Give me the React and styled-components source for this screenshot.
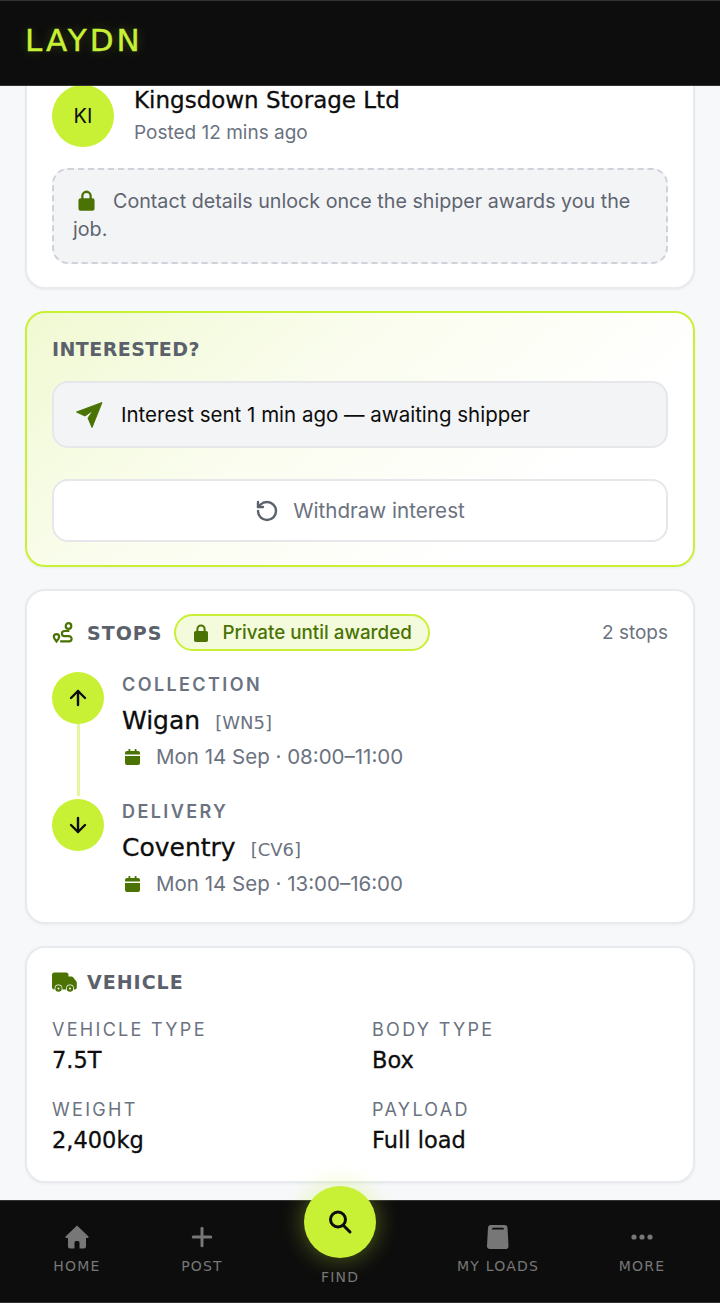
import styled, { createGlobalStyle } from "styled-components";
import { ArrowUp, ArrowDown, RotateCcw, Plus } from "lucide-react";

const GlobalStyle = createGlobalStyle`
  html, body {
    margin: 0;
    padding: 0;
    background: #f6f8fa;
  }
  * {
    box-sizing: border-box;
  }
`;

const heading = `"DejaVu Sans", "Noto Sans", sans-serif`;
const body = `Inter, "Noto Sans", sans-serif`;

const LockIcon = ({ size = 23 }) => (
  <svg width={size} height={size} viewBox="0 0 20 20" fill="#4a7304">
    <path d="M5.400 8V6a4.600 4.600 0 0 1 9.200 0v2h.6A1.800 1.800 0 0 1 17 9.800v7.400a1.800 1.800 0 0 1-1.800 1.800H4.800A1.800 1.800 0 0 1 3 17.200V9.800A1.800 1.800 0 0 1 4.800 8zm2 0h5.200V6a2.600 2.600 0 0 0-5.200 0z" />
  </svg>
);

const PlaneIcon = () => (
  <svg width="30" height="28" viewBox="0 0 30 28" fill="#4a7304" stroke="#4a7304" strokeWidth="1" strokeLinejoin="round">
    <path d="M27 1.500 L1.500 11 L10 15 L18.500 9 L13 17 L17 26.500 Z" />
  </svg>
);

const RouteIcon = () => (
  <svg width="23" height="22" viewBox="0 0 23 22" fill="none" stroke="#4a7304" strokeWidth="2.200" strokeLinecap="round">
    <circle cx="16.500" cy="4" r="2.800" />
    <path d="M16.500 9H12.500a2.600 2.600 0 0 0 0 5.200H17a2.600 2.600 0 0 1 0 5.200H9" />
    <path d="M4.500 19.500C3 17.800 1.800 16.500 1.800 14.800a2.700 2.700 0 0 1 5.400 0c0 1.700-1.200 3-2.700 4.700z" />
  </svg>
);

const CalendarIcon = () => (
  <svg width="15" height="16" viewBox="0 0 15 16" fill="#4a7304">
    <path d="M3.500 0h1.800v2h4.400V0h1.800v2H13a2 2 0 0 1 2 2v1.500H0V4a2 2 0 0 1 2-2h1.500z" />
    <path d="M0 7h15v7a2 2 0 0 1-2 2H2a2 2 0 0 1-2-2z" />
  </svg>
);

const TruckIcon = () => (
  <svg width="25" height="20" viewBox="0 0 25 20" fill="#4a7304">
    <path d="M2.500 0.500H14a2.500 2.500 0 0 1 2.500 2.500V4.500h3a2 2 0 0 1 1.600.8l3.300 4.300a2 2 0 0 1 .4 1.200V15.500a2 2 0 0 1-2 2H2.500A2.500 2.500 0 0 1 0 15V3A2.500 2.500 0 0 1 2.500 0.500z" />
    <circle cx="6.500" cy="16.500" r="3.900" fill="#fff" />
    <circle cx="18" cy="16.500" r="3.900" fill="#fff" />
    <circle cx="6.500" cy="16.500" r="3.200" />
    <circle cx="18" cy="16.500" r="3.200" />
    <circle cx="6.500" cy="16.500" r="1" fill="#fff" />
    <circle cx="18" cy="16.500" r="1" fill="#fff" />
  </svg>
);

const HomeIcon = () => (
  <svg width="26" height="26" viewBox="0 0 26 26" fill="#777">
    <path fillRule="evenodd" d="M13 1.500 L24.500 12.500 Q25 14 23.500 14 H22 V22.500 A2 2 0 0 1 20 24.500 H6 A2 2 0 0 1 4 22.500 V14 H2.500 Q1 14 1.500 12.500 Z M10.500 24.500 H15.500 V18.500 A1.500 1.500 0 0 0 14 17 H12 A1.500 1.500 0 0 0 10.500 18.500 Z" />
  </svg>
);

const BoxIcon = () => (
  <svg width="22" height="24" viewBox="0 0 22 24" fill="#777">
    <path fillRule="evenodd" d="M4.500 0h13a3 3 0 0 1 3 2.800l1 18a3 3 0 0 1-3 3.200H3a3 3 0 0 1-3-3.200l1-18A3 3 0 0 1 4.500 0zM5 4.500h12c0-1.200-.6-1.800-1.500-1.800h-9C5.600 2.700 5 3.300 5 4.500z" />
  </svg>
);

const SearchIcon = () => (
  <svg width="26" height="26" viewBox="0 0 26 26" fill="none" stroke="#0d0d0d" strokeWidth="3" strokeLinecap="round">
    <circle cx="11" cy="10.500" r="7.500" />
    <path d="M16.500 16.500l6.500 6.500" />
  </svg>
);

const DotsIcon = () => (
  <svg width="22" height="6" viewBox="0 0 22 6" fill="#777">
    <circle cx="3" cy="3" r="2.600" />
    <circle cx="11" cy="3" r="2.600" />
    <circle cx="19" cy="3" r="2.600" />
  </svg>
);

export default function App() {
  return (
    <Screen>
      <GlobalStyle />
      <Header>
        <Logo>LAYDN</Logo>
      </Header>
      <Content>
        <PosterCard>
          <Poster>
            <Avatar>KI</Avatar>
            <PosterInfo>
              <PosterName>Kingsdown Storage Ltd</PosterName>
              <PosterTime>Posted 12 mins ago</PosterTime>
            </PosterInfo>
          </Poster>
          <Notice>
            <NoticeIcon>
              <LockIcon />
            </NoticeIcon>
            Contact details unlock once the shipper awards you the job.
          </Notice>
        </PosterCard>

        <InterestCard>
          <InterestTitle>INTERESTED?</InterestTitle>
          <Status>
            <PlaneIcon />
            Interest sent 1 min ago — awaiting shipper
          </Status>
          <WithdrawButton>
            <RotateCcw size={24} strokeWidth={2.4} color="#5b616b" />
            Withdraw interest
          </WithdrawButton>
        </InterestCard>

        <StopsCard>
          <StopsHeader>
            <RouteIcon />
            <SectionTitle>STOPS</SectionTitle>
            <PrivatePill>
              <LockIcon size={20} />
              Private until awarded
            </PrivatePill>
            <StopCount>2 stops</StopCount>
          </StopsHeader>
          <Stop>
            <StopRail>
              <StopDot>
                <ArrowUp size={24} strokeWidth={2.4} color="#0d0d0d" />
              </StopDot>
              <RailLine />
            </StopRail>
            <StopBody>
              <StopKind>COLLECTION</StopKind>
              <StopPlace>
                <PlaceName>Wigan</PlaceName>
                <PlaceCode>[WN5]</PlaceCode>
              </StopPlace>
              <StopTime>
                <CalendarIcon />
                Mon 14 Sep · 08:00–11:00
              </StopTime>
            </StopBody>
          </Stop>
          <Stop>
            <StopRail>
              <StopDot>
                <ArrowDown size={24} strokeWidth={2.4} color="#0d0d0d" />
              </StopDot>
            </StopRail>
            <StopBody>
              <StopKind>DELIVERY</StopKind>
              <StopPlace>
                <PlaceName>Coventry</PlaceName>
                <PlaceCode>[CV6]</PlaceCode>
              </StopPlace>
              <StopTime>
                <CalendarIcon />
                Mon 14 Sep · 13:00–16:00
              </StopTime>
            </StopBody>
          </Stop>
        </StopsCard>

        <VehicleCard>
          <VehicleHeader>
            <TruckIcon />
            <SectionTitle>VEHICLE</SectionTitle>
          </VehicleHeader>
          <SpecGrid>
            <Spec>
              <SpecLabel>VEHICLE TYPE</SpecLabel>
              <SpecValue>7.5T</SpecValue>
            </Spec>
            <Spec>
              <SpecLabel>BODY TYPE</SpecLabel>
              <SpecValue>Box</SpecValue>
            </Spec>
            <Spec>
              <SpecLabel>WEIGHT</SpecLabel>
              <SpecValue>2,400kg</SpecValue>
            </Spec>
            <Spec>
              <SpecLabel>PAYLOAD</SpecLabel>
              <SpecValue>Full load</SpecValue>
            </Spec>
          </SpecGrid>
        </VehicleCard>
      </Content>
      <BottomNav>
        <NavItem $width={154}>
          <NavIcon><HomeIcon /></NavIcon>
          <NavLabel>HOME</NavLabel>
        </NavItem>
        <NavItem $width={96}>
          <NavIcon><Plus size={30} strokeWidth={2.4} color="#777" /></NavIcon>
          <NavLabel>POST</NavLabel>
        </NavItem>
        <FindItem>
          <FindButton>
            <SearchIcon />
          </FindButton>
          <NavLabel>FIND</NavLabel>
        </FindItem>
        <NavItem $width={136}>
          <NavIcon><BoxIcon /></NavIcon>
          <NavLabel>MY LOADS</NavLabel>
        </NavItem>
        <NavItem $width={152}>
          <NavIcon><DotsIcon /></NavIcon>
          <NavLabel>MORE</NavLabel>
        </NavItem>
      </BottomNav>
    </Screen>
  );
}

const Screen = styled.div`
  width: 720px;
  height: 1303px;
  display: flex;
  flex-direction: column;
  overflow: hidden;
  background: #f6f8fa;
  font-family: ${body};
`;

const Header = styled.header`
  height: 86px;
  flex-shrink: 0;
  display: flex;
  align-items: center;
  padding: 0 25px 6px;
  background: #0d0d0d;
  border-top: 1px solid #333;
  border-bottom: 1px solid #333;
  z-index: 2;
`;

const Logo = styled.div`
  font-family: ${heading};
  font-size: 31px;
  letter-spacing: 3px;
  color: #c8f135;
  -webkit-text-stroke: 0.4px #c8f135;
  text-shadow: 0 0 12px rgba(200, 241, 53, 0.25);
`;

const Content = styled.main`
  flex: 1;
  min-height: 0;
  padding: 0 25px;
  display: flex;
  flex-direction: column;
  gap: 22px;
  overflow: hidden;
`;

const Card = styled.section`
  flex-shrink: 0;
  background: #fff;
  border: 2px solid #e8eaee;
  border-radius: 20px;
  box-shadow: 0 1px 3px rgba(0, 0, 0, 0.05);
  padding: 24px 25px;
`;

const PosterCard = styled(Card)`
  margin-top: -24px;
  height: 227px;
  padding-top: 21px;
`;

const Poster = styled.div`
  display: flex;
  gap: 20px;
  align-items: flex-start;
`;

const Avatar = styled.div`
  width: 62px;
  height: 62px;
  flex-shrink: 0;
  border-radius: 50%;
  background: #c8f135;
  color: #0d0d0d;
  display: flex;
  align-items: center;
  justify-content: center;
  font-size: 20px;
`;

const PosterInfo = styled.div`
  display: flex;
  flex-direction: column;
`;

const PosterName = styled.div`
  font-family: ${heading};
  font-size: 23px;
  line-height: 30px;
  color: #0d0d0d;
  -webkit-text-stroke: 0.3px #0d0d0d;
`;

const PosterTime = styled.div`
  font-size: 19px;
  line-height: 30px;
  margin-top: 3px;
  color: #6b7280;
`;

const Notice = styled.div`
  margin-top: 20px;
  height: 96px;
  padding: 17px 19px;
  border: 2px dashed #cfd2d8;
  border-radius: 16px;
  background: #f3f4f6;
  color: #5f6570;
  font-size: 19.700px;
  line-height: 28px;
`;

const NoticeIcon = styled.span`
  display: inline-block;
  line-height: 0;
  vertical-align: -4px;
  margin-left: 1.500px;
  margin-right: 15.500px;
`;

const InterestCard = styled(Card)`
  height: 256px;
  border-color: #c8f135;
  background: linear-gradient(140deg, #f0f9d2 0%, #fafdee 38%, #fff 75%);
`;

const SectionTitle = styled.h2`
  margin: 0;
  font-family: ${heading};
  font-size: 19px;
  font-weight: 700;
  line-height: 24px;
  letter-spacing: 1px;
  color: #5b616b;
`;

const InterestTitle = styled(SectionTitle)`
  letter-spacing: 0.450px;
`;

const Status = styled.div`
  margin-top: 20px;
  height: 67px;
  display: flex;
  align-items: center;
  gap: 16px;
  padding: 0 21px;
  border: 2px solid #e5e7eb;
  border-radius: 16px;
  background: #f3f4f6;
  font-size: 20.500px;
  color: #0d0d0d;
`;

const WithdrawButton = styled.button`
  margin-top: 31px;
  width: 100%;
  height: 63px;
  display: flex;
  align-items: center;
  justify-content: center;
  gap: 14px;
  border: 2px solid #e5e7eb;
  border-radius: 16px;
  background: #fff;
  font-family: ${body};
  font-size: 20.600px;
  color: #6b7280;
`;

const StopsCard = styled(Card)`
  height: 335px;
  padding-top: 23px;
`;

const StopsHeader = styled.div`
  display: flex;
  align-items: center;
  gap: 12px;
  margin-bottom: 21px;
`;

const PrivatePill = styled.span`
  display: flex;
  align-items: center;
  gap: 11px;
  height: 37px;
  padding: 0 16px 0 15px;
  border: 2px solid #c8f135;
  border-radius: 19px;
  background: #f4fbdc;
  color: #4a7304;
  font-size: 18.800px;
  font-weight: 500;
`;

const StopCount = styled.span`
  margin-left: auto;
  font-size: 19px;
  color: #6b7280;
`;

const Stop = styled.div`
  display: flex;
  gap: 18px;
  height: 127px;
`;

const StopRail = styled.div`
  width: 52px;
  display: flex;
  flex-direction: column;
  align-items: center;
`;

const StopDot = styled.div`
  width: 52px;
  height: 52px;
  flex-shrink: 0;
  border-radius: 50%;
  background: #c8f135;
  display: flex;
  align-items: center;
  justify-content: center;
`;

const RailLine = styled.div`
  width: 3px;
  flex: 1;
  margin-bottom: 3px;
  background: #e4f7a0;
`;

const StopBody = styled.div`
  display: flex;
  flex-direction: column;
  padding-top: 1px;
`;

const StopKind = styled.div`
  font-size: 18px;
  font-weight: 600;
  line-height: 24px;
  letter-spacing: 2.400px;
  color: #6b7280;
`;

const StopPlace = styled.div`
  display: flex;
  align-items: baseline;
  gap: 15px;
  margin-top: 7px;
`;

const PlaceName = styled.span`
  font-family: ${heading};
  font-size: 25px;
  line-height: 34px;
  color: #0d0d0d;
  -webkit-text-stroke: 0.3px #0d0d0d;
`;

const PlaceCode = styled.span`
  font-family: ${heading};
  font-size: 18px;
  color: #6b7280;
`;

const StopTime = styled.div`
  display: flex;
  align-items: center;
  gap: 16px;
  margin-top: 5px;
  padding-left: 3px;
  font-size: 20.500px;
  line-height: 28px;
  color: #6b7280;
`;

const VehicleCard = styled(Card)`
  height: 237px;
  padding-top: 22px;
`;

const VehicleHeader = styled.div`
  display: flex;
  align-items: center;
  gap: 10px;
`;

const SpecGrid = styled.div`
  display: grid;
  grid-template-columns: 320px 1fr;
  row-gap: 21px;
  margin-top: 24px;
`;

const Spec = styled.div`
  display: flex;
  flex-direction: column;
`;

const SpecLabel = styled.div`
  font-size: 18px;
  line-height: 24px;
  letter-spacing: 2.300px;
  color: #6b7280;
`;

const SpecValue = styled.div`
  font-family: ${heading};
  font-size: 22.500px;
  line-height: 34px;
  margin-top: 1px;
  color: #0d0d0d;
  -webkit-text-stroke: 0.3px #0d0d0d;
`;

const BottomNav = styled.nav`
  height: 103px;
  flex-shrink: 0;
  display: flex;
  background: #0d0d0d;
  border-top: 1px solid #333;
  border-bottom: 1px solid #333;
  z-index: 2;
`;

const NavItem = styled.div`
  width: ${(p) => p.$width}px;
  display: flex;
  flex-direction: column;
  align-items: center;
  padding-top: 20px;
`;

const NavIcon = styled.div`
  height: 32px;
  display: flex;
  align-items: center;
  justify-content: center;
`;

const NavLabel = styled.span`
  margin-top: 4px;
  font-family: ${heading};
  font-size: 14px;
  line-height: 18px;
  letter-spacing: 1.200px;
  color: #777;
`;

const FindItem = styled.div`
  width: 180px;
  display: flex;
  flex-direction: column;
  align-items: center;
  margin-top: -15px;
`;

const FindButton = styled.div`
  width: 72px;
  height: 72px;
  border-radius: 50%;
  background: #c8f135;
  display: flex;
  align-items: center;
  justify-content: center;
  box-shadow: 0 0 24px rgba(200, 241, 53, 0.4);
  margin-bottom: 6px;
`;
